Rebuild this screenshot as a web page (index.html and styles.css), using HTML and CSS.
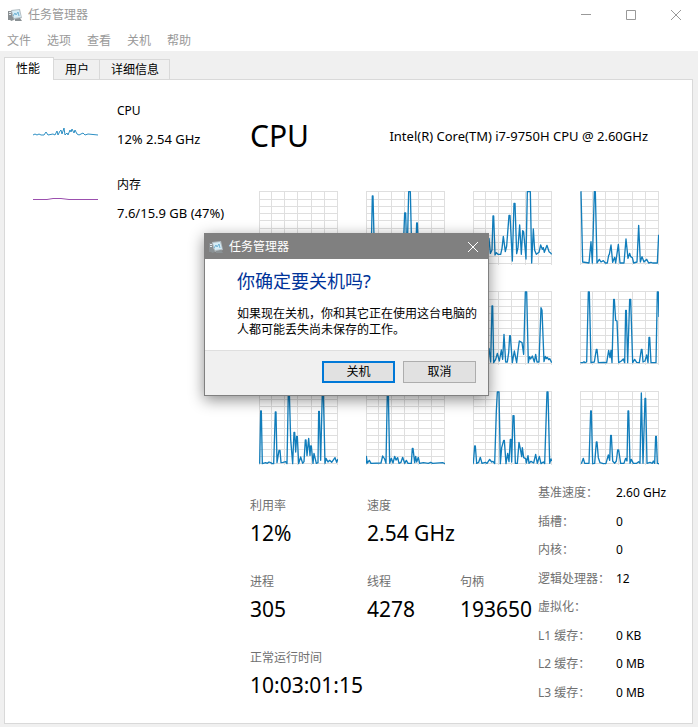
FILE: index.html
```html
<!DOCTYPE html>
<html lang="zh-CN">
<head>
<meta charset="utf-8">
<title>任务管理器</title>
<meta name="viewport" content="width=device-width, initial-scale=1">
<link rel="stylesheet" href="styles.css">
</head>
<body>
<svg class="defs" aria-hidden="true">
  <symbol id="grid" viewBox="0 0 237 222" preserveAspectRatio="none">
    <path class="grid-lines" d="M1.500 0V222M37.500 0V222M76.500 0V222M115.500 0V222M157.500 0V222M196.500 0V222M235.500 0V222M0 1.500H237M0 25.500H237M0 46.500H237M0 67.500H237M0 88.500H237M0 112.500H237M0 133.500H237M0 154.500H237M0 175.500H237M0 196.500H237M0 217.500H237"/>
  </symbol>
  <symbol id="app-icon" viewBox="0 0 16 16">
    <path d="M1 4h5v9H1z" fill="#8a8f92"/>
    <path d="M2 5h2v1H2zM2 7h2v1H2z" fill="#e5eaed"/>
    <path d="M4 3l9-1 2 9-9 2z" fill="#b4bec3"/>
    <path d="M5 4l7-1 2 7-7 1z" fill="#d6edf7"/>
    <path d="M6 9l2-3 1 2 2-3 1 4" fill="none" stroke="#6fb2d3" stroke-width="1"/>
    <path d="M2 11l4-1 1 3-3 1zM8 12l5-1 2 3H8z" fill="#8a9194"/>
  </symbol>
</svg>
<div class="window">
  <header class="titlebar">
    <svg class="app-icon" aria-hidden="true"><use href="#app-icon"/></svg>
    <h1 class="window-title">任务管理器</h1>
    <div class="window-controls">
      <button class="control" aria-label="最小化"><svg viewBox="0 0 10 10"><path d="M0 4.500H10"/></svg></button>
      <button class="control" aria-label="最大化"><svg viewBox="0 0 10 10"><path d="M.5 .5h9v9h-9z"/></svg></button>
      <button class="control" aria-label="关闭"><svg viewBox="0 0 10 10"><path d="M0 0L10 10M10 0L0 10"/></svg></button>
    </div>
  </header>
  <nav class="menubar">
    <button>文件</button><button>选项</button><button>查看</button><button>关机</button><button>帮助</button>
  </nav>
  <div class="tabs" role="tablist">
    <button class="tab active" role="tab" aria-selected="true">性能</button>
    <button class="tab" role="tab" aria-selected="false">用户</button>
    <button class="tab" role="tab" aria-selected="false">详细信息</button>
  </div>
  <main class="panel">
    <aside class="resources">
      <section class="resource">
        <svg class="mini cpu" viewBox="0 0 65 56"><polyline points="0,38 2,37 4,38 6,37 8,38 11,38 13,35 15,38 20,37 22,38 24,34 25,38 27,34 28,33 29,37 31,31 32,38 34,36 35,38 37,33 38,35 39,32 41,36 42,33 44,37 46,38 50,36 52,38 55,37 65,38"/></svg>
        <div class="resource-text"><h2>CPU</h2><p>12% 2.54 GHz</p></div>
      </section>
      <section class="resource">
        <svg class="mini memory" viewBox="0 0 65 56"><path d="M0 28.500H14L20 27.500H28L36 28.500H65"/></svg>
        <div class="resource-text"><h2>内存</h2><p>7.6/15.9 GB (47%)</p></div>
      </section>
    </aside>
    <section class="details">
      <header class="details-head"><h2>CPU</h2><p>Intel(R) Core(TM) i7-9750H CPU @ 2.60GHz</p></header>
      <div class="charts">
        <svg class="chart" viewBox="0 0 237 222" preserveAspectRatio="none"><use href="#grid"/><polyline points="0,216 237,216"/></svg>
        <svg class="chart" viewBox="0 0 237 222" preserveAspectRatio="none"><use href="#grid"/><polyline points="0,216 15,216 19,15 21,15 26,216 110,216 116,66 119,66 123,216 128,2 133,2 138,216 148,216 152,96 154,96 159,216 237,216"/></svg>
        <svg class="chart" viewBox="0 0 237 222" preserveAspectRatio="none"><use href="#grid"/><polyline points="0,216 44,180 48,142 52,187 57,177 60,75 62,75 66,192 70,185 75,190 83,190 87,172 91,136 97,182 101,165 108,73 111,73 118,210 123,37 126,37 131,188 135,170 140,102 145,190 149,119 152,123 159,204 163,2 172,2 176,216 181,114 185,178 190,190 198,184 203,162 208,175 211,170 214,184 222,163 228,182 232,185 236,190"/></svg>
        <svg class="chart" viewBox="0 0 237 222" preserveAspectRatio="none"><use href="#grid"/><polyline points="2,2 3,2 8,213 27,216 33,152 37,216 43,2 46,2 51,216 58,205 63,213 70,209 76,216 82,216 86,193 88,190 93,162 98,214 104,199 107,216 115,160 120,216 132,216 138,144 144,202 149,187 152,197 157,200 161,216 171,213 176,103 181,213 186,197 192,213 200,205 206,216 213,214 218,216 232,216 236,131"/></svg>
        <svg class="chart" viewBox="0 0 237 222" preserveAspectRatio="none"><use href="#grid"/><polyline points="0,216 237,216"/></svg>
        <svg class="chart" viewBox="0 0 237 222" preserveAspectRatio="none"><use href="#grid"/><polyline points="0,216 237,216"/></svg>
        <svg class="chart" viewBox="0 0 237 222" preserveAspectRatio="none"><use href="#grid"/><polyline points="0,216 48,172 53,213 57,45 59,45 62,215 68,205 73,187 79,210 85,177 89,205 93,130 98,213 103,213 107,185 110,134 112,134 118,215 124,180 131,215 135,180 139,150 147,155 152,190 157,3 161,3 166,215 170,197 173,204 178,195 184,213 188,190 192,213 198,213 204,50 207,58 213,212 217,196 220,203 223,199 227,206 230,203 236,215"/></svg>
        <svg class="chart" viewBox="0 0 237 222" preserveAspectRatio="none"><use href="#grid"/><polyline points="1,215 8,215 12,212 15,215 20,213 25,3 28,3 33,215 43,213 49,175 51,175 55,215 72,214 80,215 86,178 90,200 93,178 96,215 101,25 103,25 107,88 111,90 116,215 124,210 130,204 134,215 137,58 139,58 143,215 149,25 152,25 158,215 164,205 170,214 178,215 184,175 186,175 189,213 195,210 200,192 204,215 207,139 209,139 213,215 228,215 232,3 235,3 237,78"/></svg>
        <svg class="chart" viewBox="0 0 237 222" preserveAspectRatio="none"><use href="#grid"/><polyline points="2,218 5,60 7,60 10,218 20,215 25,217 30,213 35,215 40,218 44,218 49,63 51,63 54,215 60,178 63,178 66,215 72,214 80,212 84,218 88,3 91,3 95,145 101,218 105,124 107,124 110,183 113,136 115,136 119,218 125,198 131,217 135,212 139,147 141,147 144,194 149,142 153,193 155,165 157,165 162,217 165,187 172,217 177,215 179,61 181,61 185,208 190,3 193,3 198,217 201,202 207,213 212,208 218,214 228,200 233,214 237,204"/></svg>
        <svg class="chart" viewBox="0 0 237 222" preserveAspectRatio="none"><use href="#grid"/><polyline points="0,218 1,196 4,216 10,208 15,217 45,216 50,195 56,204 60,217 64,3 67,3 71,217 76,202 81,216 86,196 90,207 95,200 99,217 105,214 110,199 116,217 121,208 126,217 136,217 139,172 141,172 146,215 149,196 152,213 157,199 161,217 172,215 187,217 194,214 200,217 230,215 237,218"/></svg>
        <svg class="chart" viewBox="0 0 237 222" preserveAspectRatio="none"><use href="#grid"/><polyline points="1,218 5,165 7,165 11,217 17,214 22,199 27,217 37,214 42,217 50,205 56,213 60,211 65,218 70,60 73,3 78,3 82,218 86,170 92,148 94,148 99,218 104,187 108,212 112,145 114,145 116,213 120,74 123,74 127,217 133,217 138,154 142,174 146,197 148,170 152,200 158,203 160,216 165,194 168,217 174,211 182,216 188,190 193,217 199,196 204,218 211,213 215,218 222,3 225,3 230,217 234,204 236,210"/></svg>
        <svg class="chart" viewBox="0 0 237 222" preserveAspectRatio="none"><use href="#grid"/><polyline points="4,218 10,202 14,217 27,217 32,60 34,60 38,218 44,217 49,153 51,153 55,200 60,215 70,218 78,217 85,192 89,208 92,133 94,133 98,210 104,217 109,210 113,177 116,177 122,217 132,217 137,202 141,210 144,60 146,60 150,217 154,205 160,217 170,217 176,212 180,217 184,6 189,217 195,22 197,22 201,217 210,214 217,217 220,210 224,217 227,136 229,136 232,217 237,218"/></svg>
      </div>
      <div class="stats">
        <dl class="primary">
          <div><dt>利用率</dt><dd>12%</dd></div>
          <div class="wide"><dt>速度</dt><dd>2.54 GHz</dd></div>
          <div><dt>进程</dt><dd>305</dd></div>
          <div><dt>线程</dt><dd>4278</dd></div>
          <div><dt>句柄</dt><dd>193650</dd></div>
          <div class="wide"><dt>正常运行时间</dt><dd>10:03:01:15</dd></div>
        </dl>
        <dl class="secondary">
          <div><dt>基准速度：</dt><dd>2.60 GHz</dd></div>
          <div><dt>插槽：</dt><dd>0</dd></div>
          <div><dt>内核：</dt><dd>0</dd></div>
          <div><dt>逻辑处理器：</dt><dd>12</dd></div>
          <div><dt>虚拟化：</dt><dd></dd></div>
          <div><dt>L1 缓存：</dt><dd>0 KB</dd></div>
          <div><dt>L2 缓存：</dt><dd>0 MB</dd></div>
          <div><dt>L3 缓存：</dt><dd>0 MB</dd></div>
        </dl>
      </div>
    </section>
  </main>
  <div class="dialog" role="dialog" aria-modal="true" aria-labelledby="dialog-question">
    <header class="dialog-bar">
      <svg class="app-icon" aria-hidden="true"><use href="#app-icon"/></svg>
      <span>任务管理器</span>
      <button class="dialog-close" aria-label="关闭"><svg viewBox="0 0 10 10"><path d="M0 0L10 10M10 0L0 10"/></svg></button>
    </header>
    <div class="dialog-body">
      <h2 id="dialog-question">你确定要关机吗?</h2>
      <p>如果现在关机，你和其它正在使用这台电脑的人都可能丢失尚未保存的工作。</p>
    </div>
    <footer class="dialog-actions">
      <button class="action default">关机</button>
      <button class="action">取消</button>
    </footer>
  </div>
</div>
</body>
</html>
```
FILE: styles.css
```css
* { box-sizing: border-box; }
body, h1, h2, p, dl, dd { margin: 0; }
body {
  background: #f0f0f0;
  color: #000;
  font-family: "Noto Sans", "Noto Sans CJK SC", sans-serif;
  font-size: 12px;
  line-height: 18px;
}
h1, h2 { font-weight: 400; font-size: inherit; }
button { font: inherit; color: inherit; border: 0; padding: 0; background: none; }
svg { display: block; }
.defs { position: absolute; width: 0; height: 0; }

.window { position: relative; min-height: 100vh; display: flex; flex-direction: column; }
.titlebar { display: flex; align-items: center; height: 29px; padding-left: 7px; background: #fff; color: #999; }
.app-icon { width: 16px; height: 16px; }
.window-title { flex: 1; padding-left: 5px; }
.window-controls { display: flex; }
.control { width: 45px; height: 29px; display: grid; place-items: center; }
.control svg { width: 10px; height: 10px; fill: none; stroke: #999; overflow: visible; }

.menubar { display: flex; gap: 16px; height: 22px; padding: 2px 0 0 7px; background: #fff; color: #999; }

.tabs { display: flex; align-items: flex-end; height: 28px; padding: 0 4px; }
.tab { height: 20px; padding: 0 10px 0 11px; border: 1px solid #d9d9d9; border-width: 1px 1px 0 0; }
.tab.active { position: relative; height: 23px; margin-bottom: -1px; padding: 0 13px 0 11px; border-left-width: 1px; background: #fff; }

.panel {
  flex: 1;
  display: flex;
  margin: 0 5px 3px 4px;
  border: 1px solid #d9d9d9;
  background: #fff;
}
.resources { flex: 0 0 245px; display: flex; flex-direction: column; gap: 18px; padding: 17px 0 0 28px; }
.resource { display: flex; gap: 19px; }
.resource-text { font-size: 13px; line-height: 28px; }
.resource-text h2 { font-size: 12px; }
.mini { width: 65px; height: 56px; fill: none; stroke-width: 1; }
.mini.cpu { stroke: #2d8fc4; }
.mini.memory { stroke: #9b4fae; }

.details { flex: 1; min-width: 0; }
.details-head { display: flex; align-items: center; justify-content: space-between; height: 111px; padding-right: 44px; }
.details-head h2 { font-size: 30px; line-height: 40px; }
.details-head p { font-size: 13px; white-space: nowrap; }
.charts { display: grid; grid-template-columns: repeat(4, 1fr); gap: 26px 28px; padding: 0 33px 0 9px; }
.chart { width: 100%; height: 74px; fill: none; stroke: #117dbb; stroke-width: 4; stroke-linejoin: round; }
.grid-lines { stroke: #dfdfdf; stroke-width: 3; }

.stats { display: flex; margin-top: 14px; }
.primary { flex: 0 0 288px; display: grid; grid-template-columns: 117px 93px 78px; }
.primary > div { padding: 18px 0 8px; }
.primary .wide { grid-column: span 2; }
.primary dd { margin-top: 4px; font-size: 21px; line-height: 28px; }
dt { color: #707070; }
.secondary { display: grid; grid-auto-rows: 1fr; }
.secondary > div { display: grid; grid-template-columns: 78px auto; align-items: center; }

.dialog {
  position: absolute;
  top: 233px;
  left: 204px;
  width: 285px;
  border: 1px solid #808080;
  background: #fff;
  box-shadow: 0 4px 14px rgba(0, 0, 0, .45);
}
.dialog-bar { display: flex; align-items: center; height: 25px; padding-left: 3px; gap: 5px; background: #808080; color: #fff; }
.dialog-close { width: 30px; height: 25px; margin-left: auto; display: grid; place-items: center; }
.dialog-close svg { width: 10px; height: 10px; fill: none; stroke: #fff; overflow: visible; }
.dialog-body { padding: 10px 11px 12px 32px; }
.dialog-body h2 { color: #003399; font-size: 18px; line-height: 24px; }
.dialog-body p { margin-top: 13px; line-height: 16px; }
.dialog-actions { display: flex; justify-content: flex-end; gap: 8px; padding: 10px 12px 12px; border-top: 1px solid #dfdfdf; background: #f0f0f0; }
.action { width: 73px; height: 22px; border: 1px solid #adadad; background: #e1e1e1; }
.action.default { border: 2px solid #0078d7; }
```
